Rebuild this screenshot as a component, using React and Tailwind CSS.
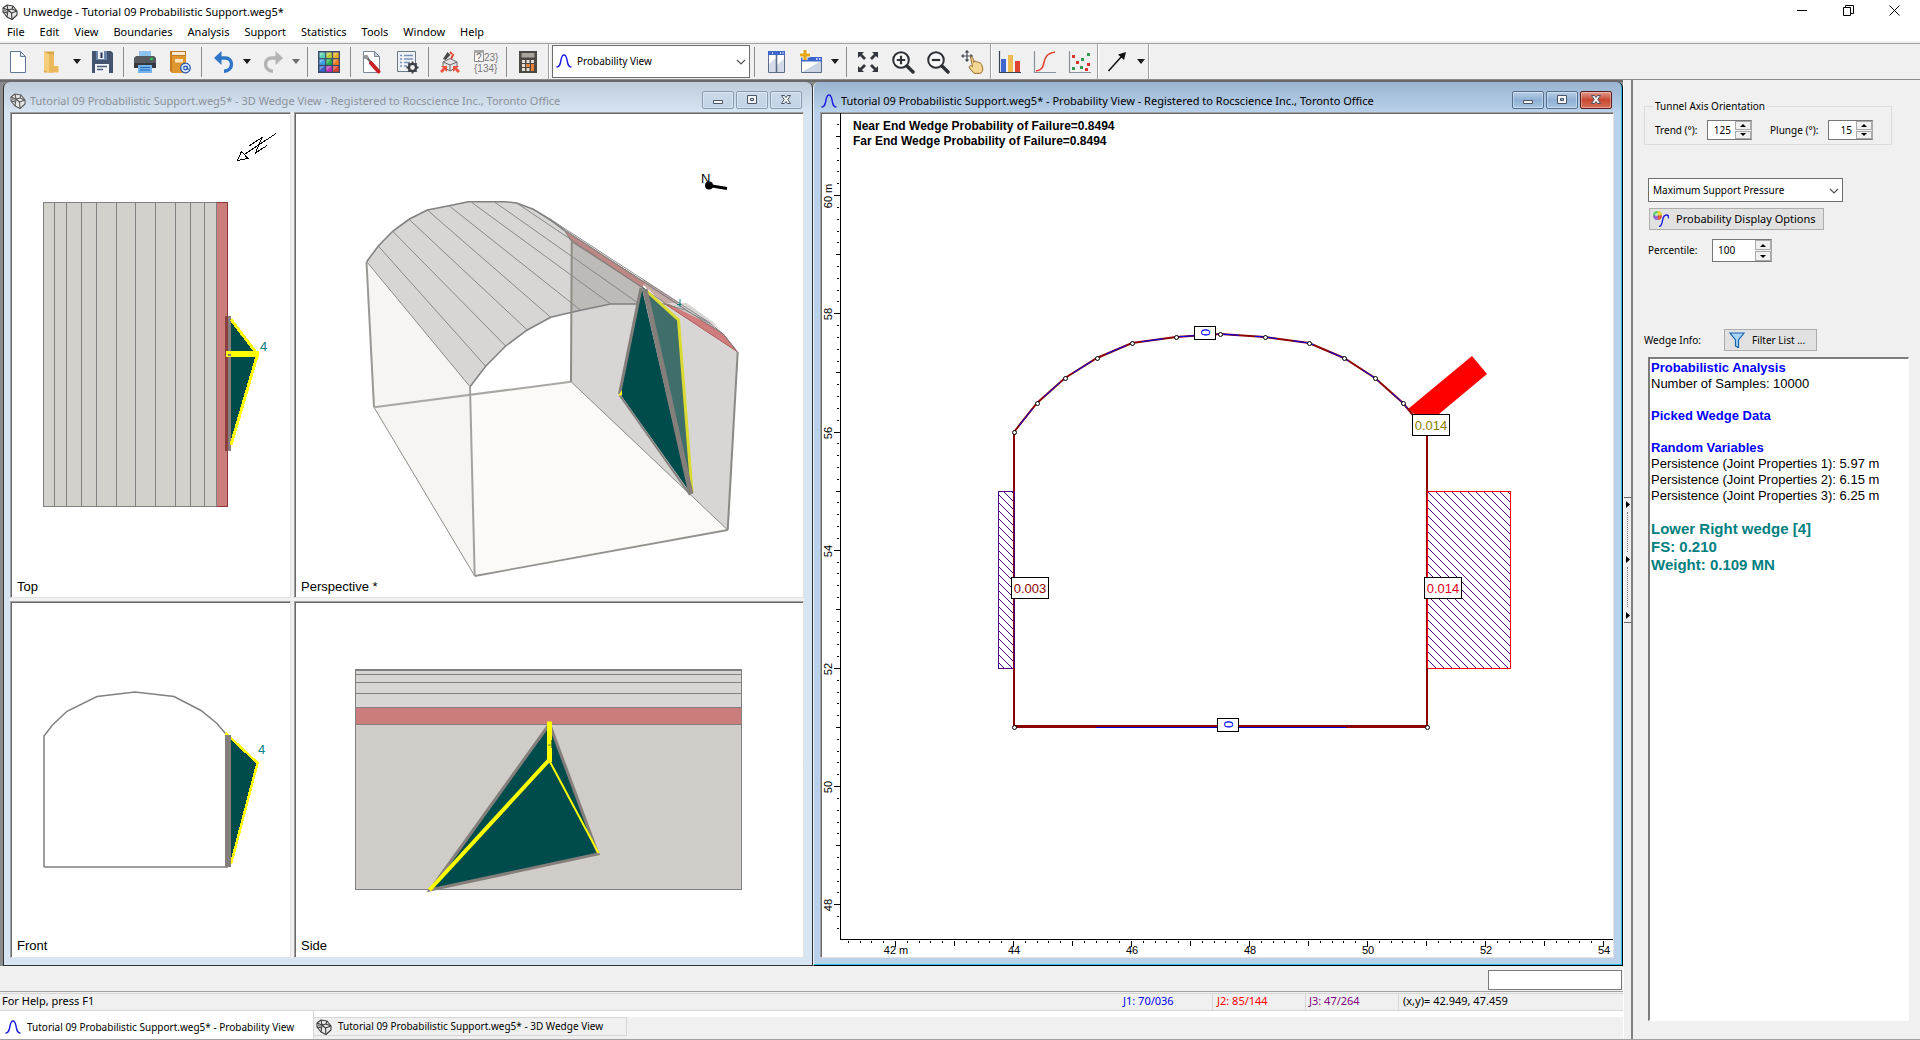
import React from "react";

const UI = "font-['Noto_Sans','Segoe_UI',sans-serif]";
const ARIAL = "font-['Liberation_Sans',Arial,sans-serif]";

/* ---------- small glyphs ---------- */

function RockIcon({ className = "", faded = false }) {
  const s = faded ? "#5a5a5a" : "#3c3c3c";
  return (
    <svg viewBox="0 0 16 16" className={"h-4 w-4 shrink-0 " + className} fill="none" stroke={s} strokeWidth="1.1" strokeLinejoin="round" aria-hidden="true">
      <path d="M1 4 5 1l6 1 4 5v4l-5 4.5L5 13 1 8z" fill="#e8e8e8" />
      <path d="M1 4l5 2 4-1 5 2M6 6 5 13M10 5l1-3M6 6 5 1M9.500 9l5.500-2M9.500 9 10 15.500M9.500 9 6 6M1 8l4.500 1" />
      <path d="M2 5l3 1.500V8L1.800 7z" fill="#8a8a8a" stroke="none" />
    </svg>
  );
}

function BellIcon({ className = "" }) {
  return (
    <svg viewBox="0 0 16 16" className={"h-4 w-4 shrink-0 " + className} fill="none" stroke="#1a1ae6" strokeWidth="1.4" strokeLinecap="round" aria-hidden="true">
      <path d="M1 14c3-.3 3.200-3 4-7 .6-3.500 1-5 3-5s2.400 1.500 3 5c.8 4 1 6.700 4 7" />
    </svg>
  );
}

function Svg({ children, ...rest }) {
  return (
    <svg viewBox="0 0 24 24" className="h-6 w-6" fill="none" aria-hidden="true" {...rest}>
      {children}
    </svg>
  );
}

const icons = {
  newFile: (
    <Svg><path d="M4.500 1.500h10l5 5v16h-15z" fill="#fff" stroke="#5f7896" /><path d="M14.500 1.500v5h5z" fill="#dfe6ee" stroke="#5f7896" /></Svg>
  ),
  open: (
    <Svg><path d="M3 1.500h10v20l-1 1H3z" fill="#d9a441" /><path d="M3 1.500 8 4v19l-5-3z" fill="#f6cd7b" /><path d="M8 4h5v12h4.500v6.500H8z" fill="#eab95c" /></Svg>
  ),
  save: (
    <Svg><path d="M2 1h19l2 2v20H2z" fill="#44546f" /><path d="M6 1h11v9H6z" fill="#6d85ab" /><path d="M8 1h6v8H8z" fill="#e8edf4" /><path d="M10.500 2.500h2V8h-2z" fill="#26324a" /><path d="M5 14h14v9H5z" fill="#f2f4f7" /><path d="M7 16.500h10M7 19.500h6" stroke="#4b5b78" strokeWidth="1.300" /></Svg>
  ),
  print: (
    <Svg><path d="M6 1h12v6H6z" fill="#8ec3f0" /><path d="M3 6h18l2 2v10H1V8z" fill="#565a5f" /><path d="M1 13h22v5H1z" fill="#35393d" /><circle cx="18.500" cy="9" r="1.300" fill="#1fd655" /><path d="M5 15h14v8H5z" fill="#74b3ec" /><path d="M7 17.500h10M7 20h10" stroke="#1e6bb5" strokeWidth="1.200" /></Svg>
  ),
  book: (
    <Svg><path d="M2 1h16v22H4l-2-2z" fill="#c47a22" /><path d="M4 2h13v3H4z" fill="#f7ead2" /><path d="M4 6h14v17H4z" fill="#e0962f" /><path d="M7 9h8v3.500H7z" fill="#fbe7bf" /><circle cx="17.500" cy="18" r="4.800" fill="#dce8fa" stroke="#2455b0" strokeWidth="1.200" /><circle cx="17.500" cy="18" r="1.800" stroke="#2455b0" strokeWidth="1.200" /><path d="M19.300 16.500v2.500c.4 1 1.500.6 1.700-.6" stroke="#2455b0" /></Svg>
  ),
  undo: (
    <Svg><path d="M5 8h9c4.500 0 6.500 3 6.500 6.200 0 3.800-3 6.800-7.500 7" stroke="#2e75c8" strokeWidth="3.400" /><path d="M10.500 1 3 8l7.500 7z" fill="#2e75c8" /></Svg>
  ),
  redo: (
    <Svg><path d="M21 8h-9c-4.500 0-6.500 3-6.500 6.200 0 3.800 3 6.800 7.500 7" stroke="#b4b4b4" strokeWidth="3.400" /><path d="M15.500 1 23 8l-7.500 7z" fill="#b4b4b4" /></Svg>
  ),
  grid: (
    <Svg>
      <path d="M1 1h22v22H1z" fill="#3a4a6b" />
      {["#58d0b4", "#b5c832", "#e8b020", "#3a9fe0", "#22b04c", "#f07818", "#3a5fc8", "#c22fb4", "#e2402c"].map((c, i) => (
        <g key={c}>
          <rect x={2.500 + (i % 3) * 6.800} y={2.500 + Math.floor(i / 3) * 6.800} width="5.600" height="5.600" fill={c} />
          <path d={`M${2.500 + (i % 3) * 6.800} ${2.500 + Math.floor(i / 3) * 6.800}h5l-5 5z`} fill="#fff" fillOpacity=".3" />
        </g>
      ))}
    </Svg>
  ),
  tools: (
    <Svg><path d="M3.500 1.500h11l5 5v16h-16z" fill="#fff" stroke="#7b8794" /><path d="M14.500 1.500v5h5z" fill="#c8d0d8" stroke="#7b8794" /><path d="M6 6l6 8" stroke="#6a6a6a" strokeWidth="2.200" /><circle cx="6" cy="7" r="2.300" fill="#9a9a9a" /><path d="M11 13l7.500 8.500" stroke="#c92222" strokeWidth="4" strokeLinecap="round" /></Svg>
  ),
  list: (
    <Svg><path d="M2.500 1.500h18v20h-18z" fill="#eef1f5" stroke="#6d7885" /><path d="M5 5.500h2M9 5.500h9M5 9h2M9 9h9M5 12.500h2M9 12.500h6M5 16h2M9 16h3" stroke="#7c92b4" strokeWidth="1.400" /><circle cx="17.500" cy="17.500" r="3.600" stroke="#3a3f45" strokeWidth="2.400" fill="#f0f0f0" /><path d="M17.500 11.500v2M17.500 21.500v2M11.500 17.500h2M21.500 17.500h2M13.300 13.300l1.400 1.400M20.300 20.300l1.400 1.400M21.700 13.300l-1.400 1.400M14.700 20.300l-1.400 1.400" stroke="#3a3f45" strokeWidth="1.800" /></Svg>
  ),
  wedge: (
    <Svg><path d="M12 8.500 19 12v5l-7 4-7-4v-5z" fill="#e4e4e4" stroke="#6a6a6a" /><path d="M5 12l7 3 7-3M12 15v6" stroke="#6a6a6a" /><path d="M5 9 9.500 2l3 3-5 5z" fill="#4a4a4a" /><path d="M12 2l2 2M15.500 4l-2.500 5" stroke="#e0402e" strokeWidth="1.800" /><path d="M9 16H3l2 2-3 3 2 2 3-3 2 2zM15 16h6l-2 2 3 3-2 2-3-3-2 2z" fill="#ee5440" /></Svg>
  ),
  calc: (
    <Svg><path d="M3 1h18v22H3z" fill="#4c4844" /><path d="M5.500 3h13v4.500h-13z" fill="#a9a39d" /><path d="M6 10h3v3H6zM10.500 10h3v3h-3zM15 10h3v3h-3zM6 14h3v3H6zM10.500 14h3v3h-3zM6 18h3v3H6zM10.500 18h3v3h-3z" fill="#e6dfd8" /><path d="M15 14h3v7h-3zM10.500 14h3v3h-3z" fill="#f08030" /></Svg>
  ),
  columns: (
    <Svg><path d="M4.500 1.500h16v21h-16z" fill="#fff" stroke="#5b6b8a" /><path d="M5 14l7-6v14H5zM13 15l7-6v13h-7z" fill="#d3dbe8" /><path d="M4 1h17v4H4z" fill="#3f66cf" /><path d="M12.500 5v17" stroke="#5b6b8a" strokeWidth="1.600" /><path d="M16 3h1M18.500 3h1M8 3h1" stroke="#fff" strokeWidth="1.400" /></Svg>
  ),
  newWindow: (
    <Svg><path d="M2.500 7.500h20v15h-20z" fill="#fff" stroke="#5b6b8a" /><path d="M22 11v11H3z" fill="#cbd4e4" /><path d="M2 7h21v4.500H2z" fill="#3f66cf" /><path d="M17 9h1.500M20 9h1.500" stroke="#fff" strokeWidth="1.400" /><path d="M6 0v10M1 5h10" stroke="#fff" strokeWidth="5" /><path d="M6 0v10M1 5h10" stroke="#e6a817" strokeWidth="3.200" /></Svg>
  ),
  expand: (
    <Svg><path d="M2 8V2h6L6 4l4 4-2 2-4-4zM22 8V2h-6l2 2-4 4 2 2 4-4zM2 16v6h6l-2-2 4-4-2-2-4 4zM22 16v6h-6l2-2-4-4 2-2 4 4z" fill="#33373d" /></Svg>
  ),
  zoomIn: (
    <Svg><circle cx="10" cy="10" r="7.800" stroke="#2e3136" strokeWidth="2" fill="#fafafa" /><path d="M10 5.800v8.400M5.800 10h8.400" stroke="#2e3136" strokeWidth="2.200" /><path d="M16 16l6 6" stroke="#2e3136" strokeWidth="3.400" strokeLinecap="round" /></Svg>
  ),
  zoomOut: (
    <Svg><circle cx="10" cy="10" r="7.800" stroke="#2e3136" strokeWidth="2" fill="#fafafa" /><path d="M5.800 10h8.400" stroke="#2e3136" strokeWidth="2.200" /><path d="M16 16l6 6" stroke="#2e3136" strokeWidth="3.400" strokeLinecap="round" /></Svg>
  ),
  pan: (
    <Svg><path d="M6 1v10M1 6h10M4.500 2.500 6 .8l1.500 1.700M4.500 9.500 6 11.200l1.500-1.700M2.500 4.500.8 6l1.700 1.500M9.500 4.500 11.200 6 9.500 7.500" stroke="#4a4f55" strokeWidth="1.200" /><path d="M9.500 7c1.400-.6 2.300.3 2.500 1.500l.8 4 .4-1.200c1.300-.6 2 0 2.300.8 1.200-.6 2-.1 2.400.8 1.300-.4 2.100.2 2.600 1.500l1.200 3.400c.4 2.400-.7 5.500-2.700 5.500h-6L8.500 18c-1-1.500.5-2.800 1.800-2l1.200.8z" fill="#f6d795" stroke="#9a6b28" /></Svg>
  ),
  bars: (
    <Svg><path d="M3 9h5v13H3z" fill="#3f66cf" /><path d="M10 5h5v17h-5z" fill="#eebb50" /><path d="M17 11h5v11h-5z" fill="#e0442f" /><path d="M1.500 1v21.500H23" stroke="#3c4450" strokeWidth="1.200" /></Svg>
  ),
  cdf: (
    <Svg><path d="M1.500 1v21.500H23" stroke="#8a9099" strokeWidth="1.200" /><path d="M3 21c5-1 7-3 8-8.500S14 3.500 22 2" stroke="#e0442f" strokeWidth="1.600" /></Svg>
  ),
  scatter: (
    <Svg><path d="M1.500 1v21.500H23" stroke="#8a9099" strokeWidth="1.200" /><path d="M4 5h3v3H4zM8 11h3v3H8zM19 13h3v3h-3zM17 18h3v3h-3z" fill="#d8342a" /><path d="M19 3h3v3h-3zM13 8h3v3h-3zM4 17h3v3H4zM12 16h3v3h-3z" fill="#2f9a4c" /></Svg>
  ),
  arrow: (
    <Svg><path d="M3.500 21 17 6" stroke="#111" strokeWidth="1.500" /><path d="M21 2l-2 8-6-5.500z" fill="#111" /></Svg>
  ),
};

function TB({ icon, label }) {
  return (
    <button type="button" aria-label={label} className="flex h-full w-[35px] shrink-0 items-center justify-center">
      {icons[icon]}
    </button>
  );
}

function Caret({ label, dim = false }) {
  return (
    <button type="button" aria-label={label} className="flex h-full w-3.5 shrink-0 items-center justify-center">
      <svg viewBox="0 0 8 5" className="h-[5px] w-2" aria-hidden="true"><path d="M0 0h8L4 5z" fill={dim ? "#6b6b6b" : "#1c1c1c"} /></svg>
    </button>
  );
}

function Sep() {
  return <span className="flex w-2 shrink-0 justify-center"><span className="h-[30px] w-px bg-[#8c8c8c]" /></span>;
}

function Band() {
  return <span className="h-full w-0.5 shrink-0 border-l border-r border-l-[#a0a0a0] border-r-white" />;
}

function Chevron({ className }) {
  return (
    <svg viewBox="0 0 10 6" className={"pointer-events-none absolute h-1.5 w-2.5 " + className} fill="none" stroke="#555" strokeWidth="1.200" aria-hidden="true">
      <path d="M1 1l4 4 4-4" />
    </svg>
  );
}

function Toolbar() {
  return (
    <div role="toolbar" aria-label="Main" className="flex h-9 shrink-0 items-center border-b border-[#8a8a8a] bg-[#f0f0f0]">
      <TB icon="newFile" label="New" />
      <TB icon="open" label="Open" />
      <Caret label="Open recent" />
      <TB icon="save" label="Save" />
      <Sep />
      <TB icon="print" label="Print" />
      <TB icon="book" label="Report" />
      <Sep />
      <TB icon="undo" label="Undo" />
      <Caret label="Undo list" />
      <TB icon="redo" label="Redo" />
      <Caret label="Redo list" dim />
      <Sep />
      <TB icon="grid" label="Display options" />
      <Sep />
      <TB icon="tools" label="Project settings" />
      <TB icon="list" label="Input data" />
      <Sep />
      <TB icon="wedge" label="Scale wedges" />
      <button type="button" aria-label="Combinations" className="flex h-full w-[35px] shrink-0 items-center justify-center">
        <svg viewBox="0 0 28 24" className="h-6 w-7" aria-hidden="true">
          <text x="13" y="11" fontSize="10" fill="#7a7a7a" fontFamily="Liberation Sans, sans-serif">23&#125;</text>
          <text x="3" y="22" fontSize="10" fill="#7a7a7a" fontFamily="Liberation Sans, sans-serif">&#123;134&#125;</text>
          <path d="M3.500.5h9v11h-9z" fill="#f6f6f6" stroke="#8a8a8a" /><path d="M3 0h10v3H3z" fill="#a8a8a8" />
          <text x="5" y="11" fontSize="10" fill="#666" fontFamily="Liberation Sans, sans-serif">?</text>
        </svg>
      </button>
      <Sep />
      <TB icon="calc" label="Compute" />
      <span className="w-[3px] shrink-0" />
      <Band />
      <div className="relative ml-0.5 h-[33px] w-[198px] shrink-0">
        <BellIcon className="pointer-events-none absolute top-2 left-1" />
        <select aria-label="View" className={UI + " h-full w-full appearance-none border border-[#6e6e6e] bg-white pl-6 text-[10px] text-black"}>
          <option>Probability View</option>
          <option>3D Wedge View</option>
        </select>
        <Chevron className="top-3.5 right-1" />
      </div>
      <Sep />
      <TB icon="columns" label="Tile windows" />
      <TB icon="newWindow" label="New window" />
      <Caret label="New window list" />
      <Sep />
      <TB icon="expand" label="Zoom all" />
      <TB icon="zoomIn" label="Zoom in" />
      <TB icon="zoomOut" label="Zoom out" />
      <TB icon="pan" label="Pan" />
      <Band />
      <TB icon="bars" label="Histogram" />
      <TB icon="cdf" label="Cumulative plot" />
      <TB icon="scatter" label="Scatter plot" />
      <Band />
      <TB icon="arrow" label="Arrow" />
      <Caret label="Drawing tools" />
      <Band />
    </div>
  );
}

/* ---------- window chrome ---------- */

function CaptionButton({ kind, close = false, active }) {
  const face = close
    ? "border-[#5a1a1a] bg-linear-to-b from-[#e29a8e] via-[#c8452f] to-[#d6705c]"
    : active
      ? "border-[#55708f] bg-linear-to-b from-[#b9cfe6] via-[#8fb0d4] to-[#a9c6e3]"
      : "border-[#8a9bb4] bg-linear-to-b from-[#cbd9e8] to-[#c3d3e4]";
  return (
    <button type="button" aria-label={kind} className={"flex h-[18px] w-8 items-center justify-center rounded-xs border shadow-[inset_0_0_0_1px_rgba(255,255,255,0.35)] " + face}>
      <svg viewBox="0 0 12 12" className="h-3 w-3" fill="#f4f4f4" stroke="#4c5666" aria-hidden="true">
        {kind === "Minimize" && <path d="M1.500 6.500h9v3h-9z" />}
        {kind === "Maximize" && <path d="M1.500 1.500h9v8h-9zM4.500 4.500h3v2h-3z" fillRule="evenodd" />}
        {kind === "Close" && <path d="M1.500 1.500h3L6 3.500l1.500-2h3L7.800 5.500l2.700 4h-3L6 7.500l-1.500 2h-3l2.700-4z" />}
      </svg>
    </button>
  );
}

function Caption({ icon, title, active }) {
  return (
    <header className={"flex h-[30px] shrink-0 items-center pt-2 " + (active ? "text-black" : "text-[#8c929a]")}>
      <span className="flex shrink-0 items-center">{icon}</span>
      <h2 className={UI + " min-w-0 flex-1 truncate text-[11px] leading-4 font-normal"}>{title}</h2>
      <div className="-mt-0.5 mr-0.5 flex gap-0.5">
        <CaptionButton kind="Minimize" active={active} />
        <CaptionButton kind="Maximize" active={active} />
        <CaptionButton kind="Close" active={active} close={active} />
      </div>
    </header>
  );
}

function Pane({ viewBox, label, children }) {
  return (
    <div className="min-h-0 min-w-0 overflow-hidden border border-t-[#a0a0a0] border-r-[#e3e3e3] border-b-[#e3e3e3] border-l-[#a0a0a0] bg-white shadow-[inset_1px_1px_0_#696969]">
      <svg viewBox={viewBox} className="block h-full w-full" role="img" aria-label={label} fontFamily="Liberation Sans, Arial, sans-serif" fontSize="13">
        {children}
      </svg>
    </div>
  );
}

/* ---------- 3D wedge views ---------- */

const G = "#808080";
const TEAL = "#004c4c";

function TopView() {
  return (
    <Pane viewBox="11 113 279 484" label="Top view">
      <g shapeRendering="crispEdges">
        <rect x="43" y="202" width="174" height="305" fill="#d3d1cc" />
        <rect x="217" y="202" width="11" height="305" fill="#cb7d7b" />
        {[54, 66, 81, 96, 116, 135, 155, 175, 190, 204, 216].map((x) => (
          <path key={x} d={`M${x}.500 202v305`} stroke={G} />
        ))}
        <rect x="43.500" y="202.500" width="184" height="304" fill="none" stroke={G} />
        <path d="M217 202.500h11M217 506.500h11M227.500 202v305" stroke="#8c3636" />
        <rect x="225" y="316" width="3" height="135" fill="#8c3f3f" />
        <rect x="228" y="316" width="3" height="135" fill="#857f7c" />
        <path d="M231 320 257 355l-26 90z" fill={TEAL} />
        <path d="M231 319.500 257.500 354.500 231 445" fill="none" stroke="#ff0" strokeWidth="3" />
        <path d="M226 354.300h33" stroke="#ff0" strokeWidth="6" />
        <path d="M228 354.500h3" stroke={G} strokeWidth="2" />
      </g>
      <text x="260" y="351" fill="#008080">4</text>
      <g fill="none" stroke="#000" shapeRendering="crispEdges">
        <path d="M276 133.500 245 154M237.500 160.500l4-9 6.500 7zM249 146l13-8.500-6.500 15.500 11.500-7.500" />
      </g>
      <text x="17" y="591">Top</text>
    </Pane>
  );
}

function PerspectiveView() {
  const roof = [
    [378.300, 246, 485.700, 366.300], [392.700, 231.300, 505.700, 346], [409, 219.300, 527.300, 330],
    [427.300, 210, 550.700, 317.300], [449, 205.700, 580.700, 310.300], [472, 202.700, 610.700, 304],
    [495, 202.300, 638, 303],
  ];
  return (
    <Pane viewBox="295 113 508 484" label="Perspective view">
      <g strokeLinejoin="round">
        <path d="M366 262 374 407.300 571 381.700 727.700 530 474.700 576z" fill="#fbfaf7" />
        <path d="M366 262 374 407.300 474.700 576 470 387z" fill="#f6f5f2" />
        <path d="M470 387 485.700 366.300 505.700 346 527.300 330 550.700 317.300 571.700 312.300 571 381.700 471 394z" fill="#fff" />
        <path d="M571.700 312.300 610.700 304H665l20 6 25 13 27.300 29-9.600 178L571 381.700z" fill="#d7d6d5" />
        <path d="M366.700 261.700 378.300 246l14.400-14.700L409 219.300l18.300-9.300 21.700-4.300 19.300-4H505l11.700 1.300 16.600 6.300L550 219.300l14 10.700 78 56 23 18h-54.300l-60 13.300L527.300 330l-21.600 16-20 20.300L470 386.700z" fill="#d7d6d5" />
        <path d="M571.700 241.700 642 287.500 639 304h-28.300l-39 8.300z" fill="#bdbbb7" />
        <path d="M564 230 571.700 241.700 642 288l3-6z" fill="#bd8784" />
        <path d="M640 282 665 304 737.300 351.700 723.300 334 645 283z" fill="#ce8483" />
        <path d="M645 286 665 304H685l38 27-80-52z" fill="#c4a9a6" />
        <path d="M665 304l20 6 38.300 24 14 17.700z" fill="#cf7e7d" stroke="#a85654" strokeWidth=".8" />
        <path d="M667 303h20l30 22-8-1z" fill="#d7d6d5" />
      </g>
      <g fill="none" stroke={G}>
        {roof.map((l) => <path key={l[0]} d={`M${l[0]} ${l[1]}L${l[2]} ${l[3]}`} strokeWidth=".9" />)}
        <path d="M516.700 203 665 303M533.300 209.300 685 309M550 219 710 323M564 230 723 334M564 230l7.700 11.700M571.700 241.700 645 289M366.700 261.700 470 386.700" strokeWidth=".9" />
        <path d="M366.700 261.700 378.300 246l14.400-14.700L409 219.300l18.300-9.300 21.700-4.300 19.300-4H505l11.700 1.300 16.600 6.300L550 219.300l14 10.700" strokeWidth="1.600" />
        <path d="M470 386.700 485.700 366.300 505.700 346 527.300 330 550.700 317.300 571.700 312.300l9-2L610.700 304H665" strokeWidth="1.500" />
        <path d="M665 304l20 6 25 13.300 13.300 10.700 14 17.700" strokeWidth="1" />
        <path d="M366.500 262 374 407.300" strokeWidth="2" stroke="#999894" />
        <path d="M374 407.300 474.700 576M571 381.700 727.700 530" strokeWidth=".9" />
        <path d="M374 407.300 571 381.700" strokeWidth="2" stroke="#a9a7a3" />
        <path d="M470 386.700 474.700 576" strokeWidth="2" stroke="#a3a29e" />
        <path d="M474.700 576 727.700 530" strokeWidth="1.800" stroke="#93928f" />
        <path d="M737.700 352 727.700 530" strokeWidth="2" stroke="#8a8986" />
        <path d="M571.700 241.700 571 381.700" strokeWidth="2" stroke="#8f8c85" />
      </g>
      <path d="M642 286.500 678.500 320 692 493z" fill="#406e6b" />
      <path d="M642 289 689 491 620 394z" fill={TEAL} />
      <path d="M646 290.500 678.500 320 692 492" fill="none" stroke="#dada30" strokeWidth="3" />
      <path d="M641 288 619.500 394" stroke="#857f7c" strokeWidth="3" />
      <path d="M619.500 395 690 495" stroke="#857f7c" strokeWidth="2" />
      <path d="M645 289 691 494" stroke="#857f7c" strokeWidth="5" />
      <path d="M618.500 395.500 622 390v5.500z" fill="#ff0" />
      <path d="M680 299v8M677 304.500h4" stroke="#008080" fill="none" />
      <path d="M709 185.500 727 188.500" stroke="#000" strokeWidth="3" />
      <circle cx="709" cy="185.500" r="4" />
      <text x="701" y="183">N</text>
      <text x="301" y="591">Perspective *</text>
    </Pane>
  );
}

function FrontView() {
  return (
    <Pane viewBox="11 602 279 355" label="Front view">
      <path d="M44 867V736l8.300-10.700 14.700-14L97 696.500l38-4.500 39 4.500 27 14 16 13 10.500 12.500M44 867h184" fill="none" stroke={G} strokeWidth="1.500" />
      <g shapeRendering="crispEdges">
        <path d="M230 735 257.500 763.500 230 862z" fill={TEAL} />
        <path d="M225.500 733 257.500 763 231 864" fill="none" stroke="#ff0" strokeWidth="2.500" />
        <rect x="225" y="735" width="6" height="132" fill="#857f7c" />
      </g>
      <text x="258" y="754" fill="#008080">4</text>
      <text x="17" y="950">Front</text>
    </Pane>
  );
}

function SideView() {
  return (
    <Pane viewBox="295 602 508 355" label="Side view">
      <g shapeRendering="crispEdges">
        <rect x="355" y="669" width="387" height="39" fill="#d7d6d5" />
        <rect x="355" y="707" width="387" height="18" fill="#cb7d7b" />
        <rect x="355" y="725" width="387" height="165" fill="#d0cdc9" />
        <path d="M355 670.500h387M355 674.500h387M355 682.500h387M355 693.500h387M355 707.500h387M355 724.500h387" stroke={G} />
        <rect x="355.500" y="669.500" width="386" height="220" fill="none" stroke={G} />
      </g>
      <path d="M549.500 724 430 890 598 854z" fill={TEAL} stroke="#857f7c" strokeWidth="3" />
      <path d="M549 760 429.500 890" stroke="#ff0" strokeWidth="4" />
      <path d="M549 760 598.500 853" stroke="#ff0" strokeWidth="2" />
      <path d="M549.500 721.500V762" stroke="#ff0" strokeWidth="5" />
      <path d="M551.500 740v8M548 745h4" stroke="#5c8c20" />
      <text x="301" y="950">Side</text>
    </Pane>
  );
}

/* ---------- probability view ---------- */

const px = (v) => 1014 + (v - 44) * 59;
const py = (v) => 432.500 - (v - 56) * 59.100;
const ROOF = [
  [1014, 432], [1037, 403], [1065, 378], [1097, 358], [1132, 343], [1176, 337], [1220, 334],
  [1265, 337], [1309, 343], [1344, 358], [1375, 378], [1403, 403], [1427, 432],
];
const steps = (from, to) => Array.from({ length: Math.round((to - from) * 5) + 1 }, (_, i) => Math.round((from + i * 0.2) * 10) / 10);

function ValueTag({ x, y, color, children }) {
  return (
    <g>
      <rect x={x} y={y} width="37" height="21" fill="#fff" stroke="#000" shapeRendering="crispEdges" />
      <text x={x + 18.500} y={y + 15} fill={color} textAnchor="middle">{children}</text>
    </g>
  );
}

function ZeroTag({ x, y }) {
  return (
    <g>
      <rect x={x} y={y} width="21" height="13" fill="#fff" stroke="#000" shapeRendering="crispEdges" />
      <text fill="#00f" textAnchor="middle" transform={`translate(${x + 15.500} ${y + 6}) rotate(-90)`}>0</text>
    </g>
  );
}

function ProbabilityPlot() {
  const arch = "M" + ROOF.map((p) => p.join(" ")).join("L");
  return (
    <Pane viewBox="821 113 792 844" label="Probability view">
      <defs>
        <pattern id="hatch" width="8" height="8" patternUnits="userSpaceOnUse">
          <path d="M0 0l8 8M-1 7l2 2M7-1l2 2" stroke="#4b0082" strokeWidth="1" shapeRendering="crispEdges" />
        </pattern>
      </defs>
      <path d="M840.500 113V939.500H1614" fill="none" stroke="#000" shapeRendering="crispEdges" />
      <g stroke="#000" shapeRendering="crispEdges">
        {steps(47.600, 61.200).map((v) => {
          const len = v % 2 === 0 ? 6 : v % 1 === 0 ? 4 : 2;
          const gap = len === 2 ? 1 : 0;
          return <path key={v} d={`M${840 - len - gap} ${Math.round(py(v)) - 0.500}h${len}`} />;
        })}
        {steps(41.200, 54).map((v) => {
          const len = v % 2 === 0 ? 6 : v % 1 === 0 ? 5 : 2;
          return <path key={v} d={`M${Math.round(px(v)) - 0.500} 941v${len}`} />;
        })}
      </g>
      <g fontSize="11" textAnchor="middle">
        {[48, 50, 52, 54, 56, 58, 60].map((v) => (
          <text key={v} transform={`translate(832 ${Math.round(py(v))}) rotate(-90)`}>{v === 60 ? "60 m" : v}</text>
        ))}
        {[42, 44, 46, 48, 50, 52, 54].map((v) => (
          <text key={v} x={Math.round(px(v))} y="954">{v === 42 ? "42 m" : v}</text>
        ))}
      </g>

      <rect x="998.500" y="491.500" width="16" height="177" fill="url(#hatch)" stroke="#4b0082" shapeRendering="crispEdges" />
      <rect x="1427.500" y="491.500" width="83" height="177" fill="url(#hatch)" stroke="#f00" shapeRendering="crispEdges" />
      <path d="M1472 356 1487 374 1427 424 1408 409z" fill="#f00" />

      <g fill="none" strokeWidth="2">
        <path d={arch} stroke="#8b0000" />
        <path d={arch} stroke="#00f" strokeWidth="1" strokeDasharray="22 16" strokeDashoffset="-8" />
        <path d="M1014 432V727M1427 727V432" stroke="#8b0000" shapeRendering="crispEdges" />
        <path d="M1014 726.500h413" stroke="#8b0000" strokeWidth="3" shapeRendering="crispEdges" />
        <path d="M1096 727.500h250" stroke="#00c" strokeWidth="1" shapeRendering="crispEdges" />
        <path d="M1014.500 491v177" stroke="#4b0082" strokeWidth="1" shapeRendering="crispEdges" />
        <path d="M1427.500 491v177" stroke="#f00" strokeWidth="1" shapeRendering="crispEdges" />
      </g>
      {[...ROOF.slice(0, 12), [1014, 727], [1427, 727]].map(([x, y]) => (
        <circle key={x + "-" + y} cx={x + 0.500} cy={y + 0.500} r="2" fill="#fff" stroke="#000" />
      ))}
      <ZeroTag x={1194.500} y={326.500} />
      <ZeroTag x={1217.500} y={718.500} />
      <ValueTag x={1412.500} y={414.500} color="#8b8000">0.014</ValueTag>
      <ValueTag x={1424.500} y={577.500} color="#e00020">0.014</ValueTag>
      <ValueTag x={1011.500} y={577.500} color="#8b0000">0.003</ValueTag>
      <g fontSize="12" fontWeight="700">
        <text x="853" y="130">Near End Wedge Probability of Failure=0.8494</text>
        <text x="853" y="145">Far End Wedge Probability of Failure=0.8494</text>
      </g>
    </Pane>
  );
}

/* ---------- right panel ---------- */

function Spin({ label }) {
  const b = "flex min-h-0 flex-1 items-center justify-center border border-[#a9a9a9] bg-[#f0f0f0]";
  return (
    <span className="flex w-4 flex-col gap-px bg-[#f0f0f0]">
      <button type="button" aria-label={label + " up"} className={b}><svg viewBox="0 0 6 3" className="h-[3px] w-1.5"><path d="M3 0l3 3H0z" /></svg></button>
      <button type="button" aria-label={label + " down"} className={b}><svg viewBox="0 0 6 3" className="h-[3px] w-1.5"><path d="M0 0h6L3 3z" /></svg></button>
    </span>
  );
}

function NumberBox({ id, value, label, className, align }) {
  return (
    <span className={"flex border border-t-[#767676] border-r-[#a9a9a9] border-b-[#767676] border-l-[#767676] bg-white " + className}>
      <input id={id} defaultValue={value} className={"w-0 min-w-0 flex-1 bg-transparent px-1 text-[10px] outline-none " + align} />
      <Spin label={label} />
    </span>
  );
}

function SidePanel() {
  const head = "text-[13px] leading-4 font-bold text-[#0000ff]";
  return (
    <aside className={UI + " flex w-[287px] shrink-0 flex-col bg-[#f0f0f0] pt-[18px] pb-[18px] pl-[11px] text-[10px] text-black"}>
      <fieldset className="w-[248px] border border-[#dcdcdc] px-2 pb-1">
        <legend className="px-0.5 leading-4">Tunnel Axis Orientation</legend>
        <div className="flex items-center pt-1.5">
          <label htmlFor="trend" className="w-[54px] pl-0.5">Trend (°):</label>
          <NumberBox id="trend" value="125" label="Trend" align="text-right" className="h-5 w-[45px]" />
          <label htmlFor="plunge" className="ml-[18px] w-[58px]">Plunge (°):</label>
          <NumberBox id="plunge" value="15" label="Plunge" align="text-right" className="h-5 w-[45px]" />
        </div>
      </fieldset>
      <div className="relative mt-[33px] ml-1 h-6 w-[195px]">
        <select aria-label="Contour" className="h-full w-full appearance-none border border-[#6e6e6e] bg-white pl-1 text-[10px]">
          <option>Maximum Support Pressure</option>
        </select>
        <Chevron className="top-2.5 right-1" />
      </div>
      <button type="button" className="mt-1.5 ml-[5px] flex h-[22px] w-[175px] items-center gap-[7px] border border-[#adadad] bg-[#e1e1e1] pl-[3px] text-[11px] whitespace-nowrap">
        <svg viewBox="0 0 16 16" className="h-4 w-4 shrink-0" fill="none" aria-hidden="true">
          <circle cx="4.500" cy="4.500" r="4.500" fill="#4ad05a" /><path d="M4.500 4.500V0a4.500 4.500 0 0 1 4.500 4.500z" fill="#f4d03a" /><path d="M4.500 4.500H9A4.500 4.500 0 0 1 4.500 9z" fill="#e8504a" /><path d="M4.500 4.500V9A4.500 4.500 0 0 1 0 4.500z" fill="#a060e8" /><circle cx="3.500" cy="3.500" r="1.500" fill="#fff" fillOpacity=".6" />
          <path d="M6 15.500c2.500 0 3-2.500 3.500-6s1.500-5.500 4-5.500 2 2 2 3.500" stroke="#1a1ae6" strokeWidth="1.400" />
        </svg>
        Probability Display Options
      </button>
      <div className="mt-[9px] ml-1 flex items-center">
        <label htmlFor="pct" className="w-16">Percentile:</label>
        <NumberBox id="pct" value="100" label="Percentile" align="pl-[5px]" className="h-[23px] w-[60px]" />
      </div>
      <div className="mt-[67px] flex items-center">
        <span id="wi" className="w-20 text-[10px]">Wedge Info:</span>
        <button type="button" className="flex h-[22px] w-[93px] items-center gap-[7px] border border-[#adadad] bg-[#e1e1e1] pl-1 text-[10px] whitespace-nowrap">
          <svg viewBox="0 0 16 16" className="h-4 w-4 shrink-0" aria-hidden="true"><path d="M1 1h14L9.500 8v8l-3-2V8z" fill="#a8d4f8" stroke="#1464b4" strokeWidth="1.200" /></svg>
          Filter List ...
        </button>
      </div>
      <section aria-labelledby="wi" className={ARIAL + " mt-1.5 mr-[11px] ml-1 min-h-0 flex-1 overflow-hidden border-t-2 border-r border-b border-l-2 border-t-[#7c7c7c] border-r-white border-b-white border-l-[#7c7c7c] bg-white pt-px pl-px text-[13px] leading-4"}>
        <h3 className={head}>Probabilistic Analysis</h3>
        <p>Number of Samples: 10000</p>
        <h3 className={head + " mt-4"}>Picked Wedge Data</h3>
        <h3 className={head + " mt-4"}>Random Variables</h3>
        <p>Persistence (Joint Properties 1): 5.97 m</p>
        <p>Persistence (Joint Properties 2): 6.15 m</p>
        <p>Persistence (Joint Properties 3): 6.25 m</p>
        <div className="mt-4 text-[15px] leading-[18px] font-bold text-[#008080]">
          <p>Lower Right wedge [4]</p>
          <p>FS: 0.210</p>
          <p>Weight: 0.109 MN</p>
        </div>
      </section>
    </aside>
  );
}

function Splitter() {
  const tri = <svg viewBox="0 0 4 7" className="h-[7px] w-1"><path d="M0 0l4 3.500L0 7z" /></svg>;
  const dots = <span className="h-10 border-l border-dotted border-[#777]" />;
  return (
    <div className="flex w-[10px] shrink-0 flex-col items-center justify-center border-r-2 border-r-[#808080] border-l border-l-white bg-[#f0f0f0]">
      <button type="button" aria-label="Collapse panel" className="flex h-[126px] w-full flex-col items-center justify-between border-t border-b border-[#696969] py-[3px]">
        {tri}{dots}{tri}{dots}{tri}
      </button>
    </div>
  );
}

/* ---------- page ---------- */

const MENUS = ["File", "Edit", "View", "Boundaries", "Analysis", "Support", "Statistics", "Tools", "Window", "Help"];
const FILE = "Tutorial 09 Probabilistic Support.weg5*";
const REG = "Registered to Rocscience Inc., Toronto Office";

export default function App() {
  return (
    <div className={UI + " flex h-screen flex-col overflow-hidden bg-white text-[11px] text-black"}>
      <header className="flex h-6 shrink-0 items-center">
        <RockIcon className="ml-0.5" />
        <h1 className="ml-[5px] flex-1 text-[11px] font-normal">Unwedge - {FILE}</h1>
        <div className="mr-4 flex gap-[26px] pb-[3px]">
          <button type="button" aria-label="Minimize" className="flex w-5 justify-center"><svg viewBox="0 0 11 11" className="h-[11px] w-[11px]" stroke="#000"><path d="M0 5.500h10" /></svg></button>
          <button type="button" aria-label="Restore" className="flex w-5 justify-center"><svg viewBox="0 0 11 11" className="h-[11px] w-[11px]" fill="none" stroke="#000"><path d="M.5 2.500h7v8h-7zM2.500 2.500v-2h8v8h-3" /></svg></button>
          <button type="button" aria-label="Close" className="flex w-5 justify-center"><svg viewBox="0 0 11 11" className="h-[11px] w-[11px]" stroke="#000"><path d="M.5.500l10 10M10.500.500l-10 10" /></svg></button>
        </div>
      </header>
      <nav aria-label="Menu" className="flex h-[17px] shrink-0 items-center gap-[15px] pl-[7px]">
        {MENUS.map((m) => <button key={m} type="button">{m}</button>)}
      </nav>
      <div className="h-[3px] shrink-0 border-b border-[#a0a0a0] bg-[#f0f0f0]" />
      <Toolbar />

      <div className="flex min-h-0 flex-1 border-b border-[#a0a0a0]">
        <div className="flex min-w-0 flex-1 flex-col bg-[#f0f0f0]">
          <main className="flex min-h-0 flex-1 border-t-2 border-t-[#696969] bg-[#8c8c8c] pl-[3px]">
            <section className="flex min-w-0 flex-1 basis-0 flex-col rounded-t-md border-r border-b border-l border-[#333] bg-linear-to-b from-[#bfcddb] to-[#d7e4f2] to-[30px] pr-2 pb-[7px] pl-1.5">
              <Caption icon={<RockIcon faded className="mr-1" />} title={`${FILE} - 3D Wedge View - ${REG}`} />
              <div className="grid min-h-0 flex-1 grid-cols-[minmax(0,281fr)_minmax(0,510fr)] grid-rows-[minmax(0,486fr)_minmax(0,357fr)] gap-[3px] bg-[#f0f0f0]">
                <TopView />
                <PerspectiveView />
                <FrontView />
                <SideView />
              </div>
            </section>
            <section className="flex min-w-0 flex-1 basis-0 flex-col rounded-t-md border-r border-b border-l border-black border-l-[#e8f0f8] bg-linear-to-b from-[#99b4d1] to-[#b9d1ea] to-[30px] pr-2 pb-[7px] pl-1.5 shadow-[inset_-1px_-1px_0_#22c0e8]">
              <Caption active icon={<BellIcon className="mr-1 ml-px" />} title={`${FILE} - Probability View - ${REG}`} />
              <div className="grid min-h-0 flex-1 grid-rows-[minmax(0,1fr)]">
                <ProbabilityPlot />
              </div>
            </section>
          </main>
          <div className="flex h-[26px] shrink-0 items-start justify-end border-b border-[#a0a0a0] pt-1 pr-px">
            <input aria-label="Prompt" className="h-5 w-[134px] border border-[#7a7a7a] bg-white" />
          </div>
          <footer className="mt-px flex h-[18px] shrink-0 items-center border-t border-b border-[#d7d7d7] pb-px">
            <p className="flex-1 pl-0.5">For Help, press F1</p>
            <p className="w-[93px] pl-1 text-[#0000ff]">J1: 70/036</p>
            <p className="w-[93px] border-l border-[#d7d7d7] pl-1 text-[#ff0000]">J2: 85/144</p>
            <p className="w-[93px] border-l border-[#d7d7d7] pl-[3px] text-[#800080]">J3: 47/264</p>
            <p className="w-[225px] border-l border-[#d7d7d7] pl-1">(x,y)= 42.949, 47.459</p>
          </footer>
          <div role="tablist" aria-label="Open views" className="flex h-7 shrink-0 items-stretch text-[10px]">
            <button type="button" role="tab" aria-selected="true" className="flex w-[314px] items-center gap-1.5 border-r border-[#d7d7d7] bg-white pt-1 pl-[5px]">
              <BellIcon />{FILE} - Probability View
            </button>
            <div className="flex min-w-0 flex-1 items-start border-t-[6px] border-white">
              <button type="button" role="tab" aria-selected="false" className="flex h-[19px] w-[313px] items-center gap-1.5 border-t border-r border-b border-[#d7d7d7] pl-0.5">
                <RockIcon />{FILE} - 3D Wedge View
              </button>
            </div>
          </div>
        </div>
        <Splitter />
        <SidePanel />
      </div>
    </div>
  );
}
